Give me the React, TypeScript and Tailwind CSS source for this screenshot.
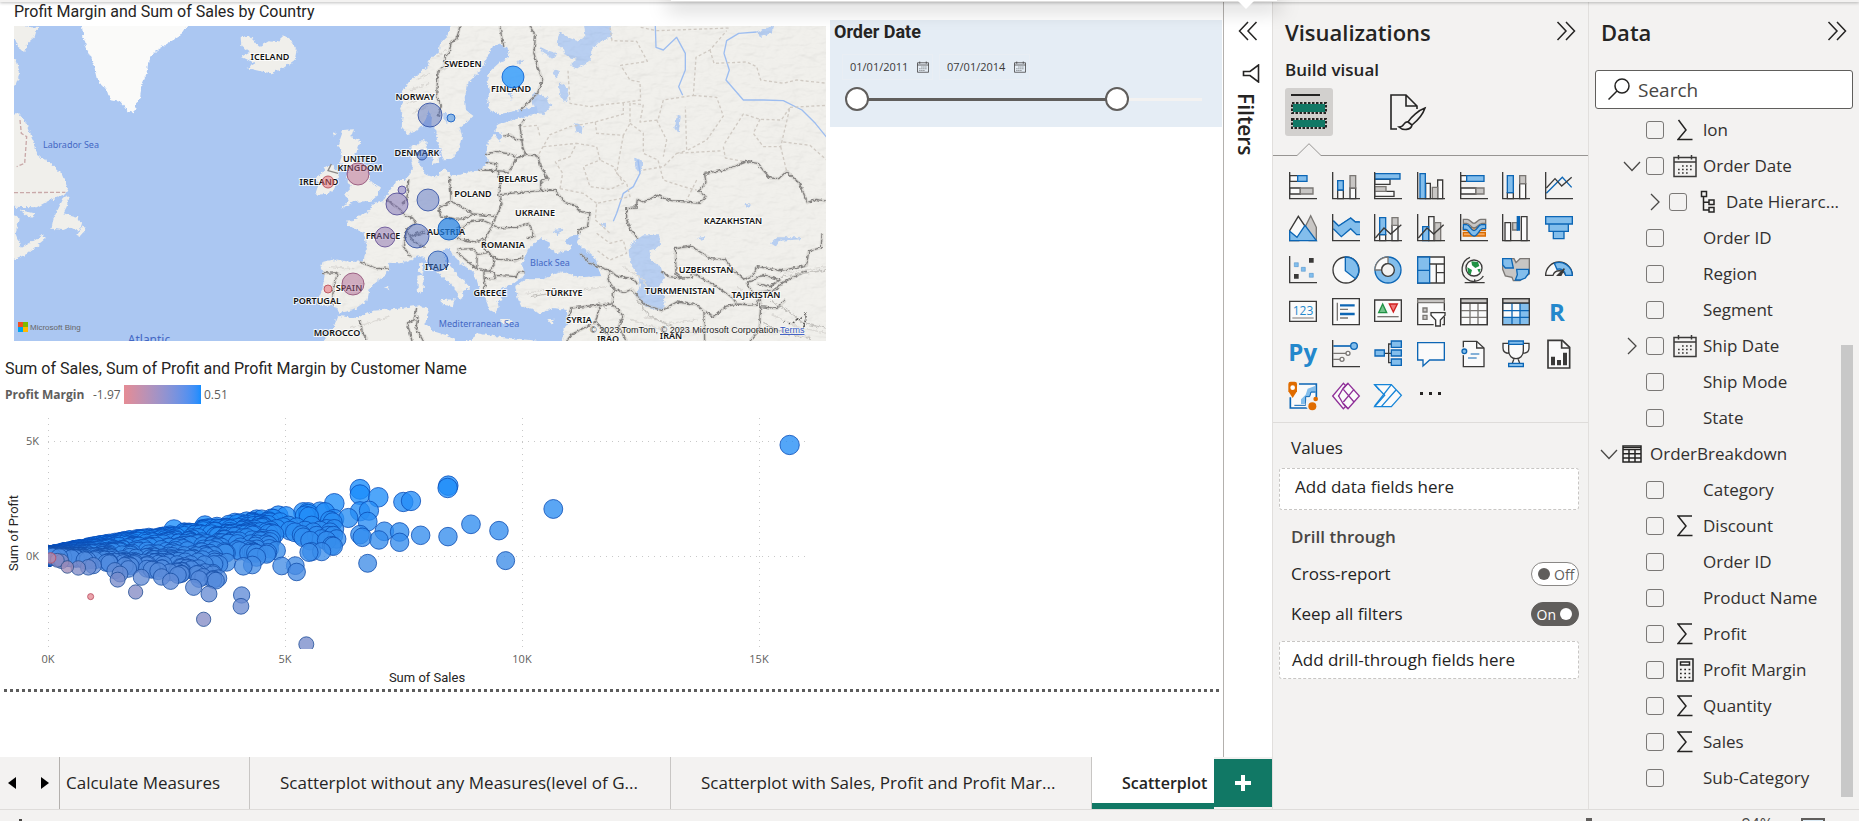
import React, { useState } from "react";

const UI = "font-['Open_Sans','Noto_Sans',sans-serif]";
const INK = "#3b3a39";
const BLUE = "#83beec";
const BLUE_LINE = "#0c66b5";
const GRAY = "#c8c6c4";
const GRAY_LINE = "#7a7774";

/* ---------- Map ---------- */

const countryLabels: [string, number, number][] = [
  ["ICELAND", 270, 60], ["NORWAY", 415, 100], ["SWEDEN", 463, 67], ["FINLAND", 511, 92],
  ["UNITED", 360, 162], ["KINGDOM", 360, 171], ["IRELAND", 319, 185], ["DENMARK", 417, 156],
  ["BELARUS", 518, 182], ["POLAND", 473, 197], ["UKRAINE", 535, 216], ["ROMANIA", 503, 248],
  ["AUSTRIA", 446, 235], ["ITALY", 437, 270], ["FRANCE", 383, 239], ["SPAIN", 349, 291],
  ["PORTUGAL", 317, 304], ["MOROCCO", 337, 336], ["GREECE", 490, 296], ["TÜRKIYE", 564, 296],
  ["SYRIA", 579, 323], ["IRAQ", 608, 342], ["IRAN", 671, 339], ["KAZAKHSTAN", 733, 224],
  ["UZBEKISTAN", 706, 273], ["TURKMENISTAN", 680, 294], ["TAJIKISTAN", 756, 298],
];

const bubbles: [number, number, number, string, string][] = [
  [358, 174, 11, "#b86a90", "#8d4a72"], [328, 182, 6, "#e0606c", "#b3454f"],
  [430, 115, 12, "#5a74c0", "#2b4aa0"], [451, 118, 4, "#2b84e6", "#0c58c0"],
  [513, 77, 11, "#118dff", "#0a5fd0"], [422, 155, 5, "#4a76cc", "#2b4aa0"],
  [402, 190, 4, "#7a70c0", "#4a4498"], [397, 204, 11, "#7a6cb4", "#4c4590"],
  [428, 200, 11, "#5a74c4", "#2b4aa0"], [385, 237, 10, "#8a6fae", "#5c4590"],
  [417, 236, 12, "#5570c0", "#2b4aa0"], [449, 229, 11, "#1f80e6", "#0a55b8"],
  [438, 261, 10, "#3d78d4", "#1c4fae"], [353, 284, 11, "#b06a94", "#8d4a72"],
  [328, 289, 4, "#e8606c", "#b3454f"],
];

const EUROPE =
  "M128 60 L112 108 L92 128 L84 158 L60 176 L52 200 L26 222 L2 240 L-14 262 L-26 282 L-20 306 L-30 326 L-22 352 L-26 382 L-8 402 L20 394 L36 376 L48 356 L56 330 L66 352 L64 376 L80 392 L78 420 L92 446 L98 478 L128 476 L146 448 L156 408 L150 384 L170 368 L190 348 L168 330 L164 292 L176 246 L210 214 L232 172 L244 140 L266 132 L292 142 L298 168 L268 188 L240 214 L230 244 L240 270 L232 302 L238 330 L270 342 L330 330 L380 318 L384 338 L340 352 L300 362 L262 374 L256 392 L278 404 L270 424 L252 404 L234 424 L228 462 L236 488 L218 500 L208 512 L180 514 L152 524 L122 526 L104 506 L76 532 L48 526 L34 500 L24 488 L34 462 L48 452 L50 424 L36 420 L20 436 L2 440 L0 470 L8 500 L2 520 L-14 540 L-40 540 L-52 560 L-70 584 L-82 604 L-108 612 L-126 636 L-150 646 L-166 660 L-190 662 L-188 678 L-160 686 L-138 700 L-130 740 L-140 784 L-180 786 L-228 778 L-262 786 L-268 804 L-256 826 L-264 872 L-276 900 L-268 918 L-228 916 L-212 938 L-170 930 L-128 900 L-120 862 L-74 824 L-62 804 L-66 788 L-30 790 L0 784 L22 766 L44 776 L62 802 L92 824 L120 850 L138 870 L146 896 L160 890 L158 868 L180 866 L176 854 L150 834 L128 806 L104 780 L98 748 L120 744 L126 762 L156 792 L188 816 L202 842 L210 872 L224 892 L240 930 L256 938 L266 922 L262 904 L278 900 L262 878 L280 862 L312 850 L344 826 L336 792 L354 750 L372 730 L390 714 L420 728 L414 742 L440 760 L474 750 L484 738 L462 726 L480 710 L512 700 L500 728 L530 752 L556 776 L566 808 L574 828 L510 832 L452 812 L400 838 L344 838 L316 858 L322 892 L334 920 L364 926 L386 942 L430 924 L470 930 L476 962 L462 992 L452 1040 L1270 1040 L1270 60 Z";

const borders =
  "M150 78 L140 118 L124 124 L118 156 L106 170 L102 200 L84 214 L80 290 L94 318 L84 350 M270 78 L276 118 L282 138 M360 78 L376 108 L372 160 L384 204 L398 240 L382 280 L332 330 M342 360 L330 380 L334 410 L338 440 L346 464 M280 408 L300 404 L318 418 L334 420 M226 464 L258 454 L300 462 L318 470 M230 488 L262 492 L258 512 L208 510 M262 512 L296 516 L318 476 L346 464 L384 468 L392 500 L414 536 L392 544 L392 572 L300 580 L270 584 M262 512 L272 546 L266 582 L276 612 L258 650 L192 642 L124 604 L118 528 M124 604 L86 624 L92 648 L140 658 L160 656 L192 642 M392 572 L434 570 L466 608 L498 616 L506 632 L540 642 L532 680 L506 690 L508 704 M258 650 L248 674 L264 684 L318 682 L356 670 L374 710 L350 714 M160 680 L184 664 L216 660 L248 674 M248 674 L226 716 L196 726 L140 716 L156 696 L160 680 L96 700 M226 716 L216 738 L250 770 L264 778 L318 782 L340 770 M140 748 L190 746 L202 764 L200 808 L140 756 M202 764 L232 758 L250 770 L252 796 L236 814 L206 806 M252 816 L256 836 L222 836 L222 816 L252 816 M256 826 L320 830 L324 816 L346 818 M222 836 L226 856 L210 888 M510 760 L540 790 L600 812 L620 828 L668 836 L684 852 M600 812 L594 840 L612 866 L640 878 L666 868 M612 866 L606 912 L640 948 L626 980 L650 1023 M606 912 L540 918 L482 924 L478 950 M570 918 L556 966 L484 1004 L470 1023 M556 966 L600 1010 M666 868 L700 912 L756 932 L800 906 L860 914 L882 934 L884 1023 M882 934 L912 950 L946 920 L980 912 L968 894 L918 858 L860 826 L842 816 L846 832 L814 834 L798 820 L796 746 L842 738 L902 776 L944 778 L976 816 L1002 838 L1030 826 L1042 800 L1112 812 L1190 796 L1196 754 L1234 742 L1236 700 M814 834 L778 830 L752 814 M980 912 L1040 916 L1050 880 L1100 868 L1114 850 L1190 812 M1040 850 L1080 860 L1110 840 L1060 824 L1010 850 L1030 880 L1090 870 M1050 880 L1052 920 L1100 926 L1126 900 M1052 920 L1048 990 L1020 1023 M684 716 L662 690 L650 660 L650 626 L678 624 L682 598 L700 606 L742 586 L784 602 L870 610 L888 590 L866 574 L888 548 L884 520 L946 510 L1010 484 L1042 490 L1080 534 L1106 536 L1130 514 L1170 552 L1192 608 L1216 598 L1270 606 M-72 598 L-30 628 L-16 646 L8 654 L16 668 L-10 690 L6 720 L44 742 M-4 542 L-10 600 L-24 612 M-10 690 L-20 740 L4 772 M44 690 L0 710 L40 700 L96 700 M-150 786 L-100 806 L-64 804 M-262 818 L-216 820 L-228 850 L-234 914 M-150 960 L-142 1000 L-128 1018 M20 924 L12 960 L-8 970 L6 1023 M24 950 L18 985 L40 1023";

const regions =
  "M600 82 L606 122 L680 124 L712 184 L632 196 L660 240 L690 246 L692 300 L640 308 L598 312 L540 320 L480 310 L474 212 M692 82 L740 92 L960 84 M640 308 L640 342 L556 366 L480 380 L420 404 L382 470 M556 366 L560 400 L640 406 L660 370 L660 310 L700 314 L690 366 L744 360 L760 300 L850 286 L858 172 L900 150 L950 92 M850 286 L920 292 L940 348 L890 420 L830 452 L826 320 M900 150 L912 190 L1010 186 L1040 200 L1052 240 L1120 250 L1160 240 L1252 250 M1140 322 L1252 316 M940 440 L946 474 L1000 484 M944 430 L1000 342 L1050 358 L1114 360 L1140 322 L1112 440 L1060 440 L1030 400 L1050 358 M1120 426 L1200 436 L1250 480 M1112 440 L1130 514 M450 566 L458 520 L436 486 L480 470 L500 430 L560 440 L570 480 L520 500 L540 560 L600 568 L640 550 L610 500 L570 480 M640 406 L630 460 L620 520 L650 550 L660 590 L560 610 L556 660 L600 700 M660 370 L700 400 L700 460 L744 480 L760 540 L820 560 L860 570 M700 510 L760 500 L800 460 L938 452 M740 360 L770 420 L760 470 M450 566 L520 580 L560 610 M560 700 L600 730 L640 720 L650 760 L600 780 L560 750 M340 380 L382 376 L390 410 M400 440 L500 430 M860 540 L830 600 M800 460 L830 452";

function MapVisual() {
  return (
    <svg className="block h-[315px] w-[812px]" viewBox="14 26 812 315" role="img" aria-label="Map of profit margin and sales by country">
      <defs>
        <filter id="relief" x="0" y="0" width="100%" height="100%">
          <feTurbulence type="fractalNoise" baseFrequency="0.02 0.04" numOctaves="4" seed="9" result="n" />
          <feDiffuseLighting in="n" surfaceScale="10" lightingColor="#f8f7f3" result="l">
            <feDistantLight azimuth="225" elevation="75" />
          </feDiffuseLighting>
          <feComposite in="l" in2="SourceGraphic" operator="in" />
        </filter>
        <filter id="coast" x="-5%" y="-5%" width="110%" height="110%">
          <feTurbulence type="fractalNoise" baseFrequency="0.09" numOctaves="3" seed="4" />
          <feDisplacementMap in="SourceGraphic" scale="14" xChannelSelector="R" yChannelSelector="G" />
        </filter>
      </defs>
      <rect x="14" y="26" width="812" height="315" fill="#abc7f2" />
      <g transform="scale(0.33333)">
        <g filter="url(#coast)" fill="#f0efeb">
          <path fill="#fafaf9" d="M244 60 L250 110 L262 150 L280 190 L290 235 L320 270 L330 300 L362 306 L388 336 L402 340 L408 310 L420 300 L424 256 L440 220 L446 180 L470 150 L500 132 L540 108 L566 70 Z" />
          <path d="M20 70 L112 84 L104 110 L82 130 L76 156 L58 146 L46 120 L20 120 Z M20 160 L50 180 L60 220 L44 260 L20 250 Z" />
          <path d="M20 350 L58 340 L76 364 L90 400 L104 430 L112 466 L150 488 L184 520 L204 566 L196 582 L150 600 L110 622 L20 620 Z M192 592 L206 586 L200 620 L190 640 L230 650 L246 672 L236 694 L210 682 L190 690 L154 686 L160 656 Z M232 704 L250 676 L256 690 L240 708 Z M20 640 L60 656 L46 700 L64 744 L130 706 L134 718 L80 762 L20 790 Z M60 630 L100 640 L106 650 L80 648 Z" />
          <path d="M722 112 L748 106 L766 128 L778 140 L806 124 L830 126 L852 106 L870 120 L890 150 L884 180 L850 204 L812 220 L782 214 L742 204 L766 190 L724 170 L750 156 L724 138 Z" />
          <path d="M1030 390 L1062 388 L1054 412 L1082 424 L1070 456 L1056 474 L1090 490 L1106 520 L1112 546 L1140 560 L1136 584 L1114 602 L1060 606 L1026 626 L1046 596 L1036 580 L1054 560 L1040 540 L1046 510 L1020 490 L1026 460 L1014 436 Z" />
          <path d="M976 500 L1000 494 L1016 520 L1006 566 L980 582 L946 584 L956 556 L948 530 L966 520 Z M998 396 L1010 400 L1002 412 Z" />
        </g>
        <g transform="translate(1230 0)">
          <g filter="url(#coast)">
            <path fill="#f0efeb" d={EUROPE} />
            <path fill="#f0efeb" d="M-280 1050 L-232 988 L-216 948 L-160 954 L-110 932 L-40 926 L30 916 L56 930 L46 970 L70 994 L110 1006 L150 1030 L190 1016 L200 1000 L250 1008 L300 1014 L380 1022 L380 1050 Z M70 464 L84 460 L88 488 L66 492 Z M94 900 L134 898 L128 922 L96 912 Z M22 830 L40 826 L42 874 L24 882 Z M28 786 L40 790 L36 822 L26 814 Z M270 958 L310 962 L300 972 L272 968 Z M412 958 L434 956 L424 972 Z M-78 862 L-66 858 L-60 868 Z" />
            <g fill="#abc7f2">
              <path d="M380 78 L600 60 L606 110 L570 124 L544 150 L542 180 L500 206 L480 196 L500 176 L470 170 L460 146 L440 130 L448 96 L470 110 L500 122 L526 110 L520 78 Z" />
              <path d="M668 726 L700 706 L748 706 L750 734 L734 748 L718 750 L724 782 L752 800 L764 832 L750 860 L762 880 L764 926 L730 930 L700 914 L676 886 L690 860 L684 826 L660 790 L656 750 Z" />
              <path d="M372 276 L410 292 L424 316 L400 346 L378 336 L364 304 Z M436 206 L450 216 L440 236 L428 220 Z M446 246 L470 262 L476 290 L462 308 L450 280 Z M390 140 L410 150 L440 160 L430 176 L400 160 Z" />
              <path d="M1040 94 L1090 78 L1084 100 L1050 112 Z M1080 730 L1100 712 L1176 712 L1174 718 L1110 722 L1096 742 Z M800 346 L812 350 L806 400 L796 384 Z M494 372 L520 380 L518 400 L500 398 Z M860 714 L886 710 L876 722 Z M1004 612 L1026 614 L1006 624 Z M672 470 L700 484 L690 520 L676 500 Z M574 670 L590 668 L584 690 Z M100 340 L112 338 L112 370 L100 360 Z M430 690 L458 686 L440 708 Z M320 186 L340 180 L330 194 Z M300 250 L310 270 L306 300 L296 280 Z" />
            </g>
            <path fill="#f0efeb" d="M372 60 L520 60 L526 104 L500 118 L470 106 L440 84 L400 84 Z" />
          </g>
          <path filter="url(#relief)" opacity="0.18" d={EUROPE} />
          <g fill="none" strokeLinejoin="round">
            <path stroke="#9dbdf0" strokeWidth="4" d="M1040 96 L986 100 L950 122 L942 160 L958 210 L948 240 L1000 300 L1060 300 L1120 302 L1176 330 L1216 370 L1250 412 M736 78 L738 142 L760 150 L800 112 L826 160 L826 210 L806 260 L818 286 M684 480 L690 520 L670 560 L640 580 L620 640 L610 664" />
            <path stroke="#d0cac3" strokeWidth="4" strokeDasharray="9 7" d={regions} />
            <path stroke="#b9b7b3" strokeWidth="10" opacity="0.35" d={borders} />
            <path stroke="#858381" strokeWidth="4" d={borders} filter="url(#coast)" />
          </g>
          <g fill="none" stroke="#dcdad6" strokeWidth="4" filter="url(#coast)">
            <path d="M20 240 L60 220 M0 270 L60 250 M-10 310 L50 290 M10 340 L60 310 M80 170 L110 150 M90 210 L150 190 M350 880 L400 870 L460 890 M520 870 L590 860 M640 800 L700 840 L720 880 M700 950 L780 970 L860 960 M980 860 L1040 900 M1080 940 L1160 980 L1250 1000 M1120 820 L1250 800 M660 960 L760 990 M1100 990 L1200 1010 M-240 800 L-170 806 M-200 860 L-130 850 M-180 985 L-60 950" />
            <path stroke="#c4c2be" d="M1080 900 L1130 930 L1180 970 L1250 985 M1060 970 L1120 1000 L1200 1015 M1110 830 L1180 820 L1250 810 M680 900 L720 950 L800 985 L860 1000 M560 900 L590 930 M360 890 L420 880" />
            <path stroke="#5a5856" strokeDasharray="8 6" d="M1120 966 L1150 968 L1190 940 L1180 990" />
          </g>
        </g>
        <g fill="none" stroke="#c9a9a9" strokeWidth="4" strokeDasharray="12 6">
          <path d="M60 360 L64 400 L80 410 L74 490 L50 500 M42 578 L196 577" />
          <path stroke="#8b8886" strokeDasharray="none" d="M994 492 L984 512 L1014 520" />
        </g>
      </g>
      <g className="font-['Noto_Sans',sans-serif] text-[9px] font-semibold" textAnchor="middle" fill="#111" stroke="#fff" strokeWidth="2" strokeOpacity="0.8" style={{ paintOrder: "stroke" }}>
        {countryLabels.map(([name, x, y]) => (
          <text key={name} x={x} y={y}>{name}</text>
        ))}
      </g>
      <g className="font-['Noto_Sans',sans-serif] text-[9px]" fill="#4467c4" textAnchor="middle">
        <text x="71" y="148">Labrador Sea</text>
        <text x="550" y="266">Black Sea</text>
        <text x="479" y="327">Mediterranean Sea</text>
        <text x="149" y="344" className="text-[12px]">Atlantic</text>
      </g>
      {bubbles.map(([x, y, r, fill, stroke]) => (
        <circle key={`${x}-${y}`} cx={x} cy={y} r={r} fill={fill} fillOpacity={fill === "#118dff" || fill === "#1f80e6" ? 0.7 : 0.5} stroke={stroke} strokeOpacity="0.8" />
      ))}
      <g>
        <rect x="18" y="322" width="5" height="5" fill="#f25022" />
        <rect x="23" y="322" width="5" height="5" fill="#7fba00" />
        <rect x="18" y="327" width="5" height="5" fill="#00a4ef" />
        <rect x="23" y="327" width="5" height="5" fill="#ffb900" />
        <text x="30" y="330" className="font-['Liberation_Sans',sans-serif] text-[8px]" fill="#666">Microsoft Bing</text>
      </g>
      <g className="font-['Liberation_Sans',sans-serif] text-[9px]" fill="#222" stroke="#fff" strokeWidth="1" strokeOpacity="0.6" style={{ paintOrder: "stroke" }}>
        <text x="590" y="333">© 2023 TomTom, © 2023 Microsoft Corporation</text>
        <text x="780" y="333" fill="#3355c0" textDecoration="underline">Terms</text>
      </g>
    </svg>
  );
}

/* ---------- Scatter chart ---------- */

type Customer = { sales: number; profit: number };

const standouts: [number, number][] = [
  [522, 542], [1003, 463], [1080, 421], [1080, 437], [1135, 445], [1210, 459], [1233, 456], [1080, 487],
  [1107, 485], [1045, 507], [1103, 518], [1080, 557], [1087, 565], [1153, 547], [1199, 549], [1137, 573],
  [1199, 580], [1103, 643], [1262, 559], [1344, 563], [1413, 526], [1497, 545], [1517, 635], [1345, 410],
  [1343, 417], [1660, 480], [2369, 288], [845, 651], [886, 650], [890, 669], [829, 605], [730, 652],
  [757, 648], [725, 738], [723, 772], [581, 715], [627, 735], [611, 811], [919, 886], [407, 729],
  [353, 692], [272, 743], [512, 697], [424, 685], [648, 695], [655, 688], [485, 684], [235, 657],
  [202, 654], [265, 655], [280, 650], [152, 627], [172, 634], [185, 637], [927, 610], [935, 608],
  [965, 608], [1000, 592], [1010, 570], [930, 575], [950, 560], [985, 560], [960, 545], [1003, 540],
  [998, 520], [990, 515], [925, 490], [915, 500], [927, 503], [960, 488], [975, 490], [905, 558],
  [885, 550], [870, 545], [850, 535], [835, 500], [858, 502], [823, 556], [800, 550], [1003, 510],
  [980, 575], [910, 565], [935, 530], [965, 570], [770, 625], [680, 640], [560, 658], [345, 665],
  [360, 675], [385, 660], [615, 670], [640, 690], [510, 670], [740, 518], [770, 512], [785, 512],
  [800, 520], [820, 510], [840, 520], [830, 540], [865, 530], [890, 535], [915, 545], [940, 550],
  [910, 490], [925, 495], [980, 540], [990, 550], [1000, 560], [995, 590], [705, 522], [615, 530],
];

function buildCustomers(): Customer[] {
  let seed = 20231;
  const next = () => {
    seed = (seed * 16807) % 2147483647;
    return seed / 2147483647;
  };
  const list: Customer[] = standouts.map(([x, y]) => ({
    sales: ((x - 145) / 711) * 5000,
    profit: ((622 - y) / 345) * 5000,
  }));
  for (let i = 0; i < 780; i++) {
    const sales = 20 + 4700 * Math.pow(next(), 1.8);
    const ceiling = 0.49 - 0.13 * Math.min(1, sales / 2500);
    let margin = ceiling - 0.68 * Math.pow(next(), 1.5);
    if (sales > 3600) margin = Math.max(margin, 0.02 + next() * 0.3);
    list.push({ sales, profit: sales * margin });
  }
  return list;
}

const low = [229, 139, 148];
const high = [17, 141, 255];

const marks = buildCustomers()
  .map(({ sales, profit }) => {
    const t = Math.min(1, Math.max(0, (profit / sales + 1.97) / 2.48));
    const rgb = low.map((c, i) => Math.round(c + (high[i] - c) * t));
    const edge = [rgb[0] * 0.25, rgb[1] * 0.55, rgb[2] * 0.75].map(Math.round);
    if (t < 0.3) { edge[0] = 185; edge[1] = 75; edge[2] = 95; }
    return {
      x: 48.3 + (sales / 5000) * 237,
      y: 557.3 - (profit / 5000) * 115,
      r: Math.sqrt(9 + 92 * t),
      fill: `rgb(${rgb.join(",")})`,
      stroke: `rgb(${edge.join(",")})`,
    };
  })
  .sort((a, b) => b.r - a.r);

function ScatterVisual() {
  return (
    <svg className="block h-[272px] w-[830px]" viewBox="0 414 830 272" role="img" aria-label="Scatter chart of sales and profit by customer">
      <clipPath id="plot"><rect x="48" y="414" width="760" height="236" /></clipPath>
      <g stroke="#c8c8c8" strokeDasharray="1 5" fill="none">
        {[48.5, 285.5, 522.5, 759.5].map((x) => <path key={x} d={`M${x} 419V650`} />)}
        {[442.5, 557.5].map((y) => <path key={y} d={`M48 ${y}H806`} />)}
      </g>
      <g clipPath="url(#plot)">
        {marks.map((m, i) => (
          <circle key={i} cx={m.x} cy={m.y} r={m.r} fill={m.fill} fillOpacity="0.78" stroke={m.stroke} strokeOpacity="0.8" />
        ))}
      </g>
      <g className="font-['Open_Sans',sans-serif] text-[11px]" fill="#605e5c">
        <text x="39" y="446" textAnchor="end">5K</text>
        <text x="39" y="561" textAnchor="end">0K</text>
        <text x="48" y="664" textAnchor="middle">0K</text>
        <text x="285" y="664" textAnchor="middle">5K</text>
        <text x="522" y="664" textAnchor="middle">10K</text>
        <text x="759" y="664" textAnchor="middle">15K</text>
      </g>
      <g className="font-[Roboto,sans-serif] text-[13px]" fill="#252423" textAnchor="middle">
        <text x="427" y="683">Sum of Sales</text>
        <text transform="translate(18 534) rotate(-90)">Sum of Profit</text>
      </g>
    </svg>
  );
}

/* ---------- Small icons ---------- */

function DoubleChevron({ left = false }: { left?: boolean }) {
  return (
    <svg width="20" height="20" viewBox="0 0 20 20" fill="none" stroke="#252423" strokeWidth="1.5">
      {left ? <path d="M10 1L1.500 10L10 19M18.500 1L10 10L18.500 19" /> : <path d="M1.500 1L10 10L1.500 19M10 1L18.500 10L10 19" />}
    </svg>
  );
}

function CalendarIcon({ size }: { size: number }) {
  return (
    <svg width={size} height={size} viewBox="0 0 24 24" fill="none" stroke="#3b3a39" strokeWidth="1.500">
      <path d="M1 3.500h22v19H1zM1 8h22M5.500 1v4.500M18.500 1v4.500" />
      <path strokeWidth="1.700" strokeDasharray="1.700 2.300" d="M9 12h11M5 15.500h15M5 19h11" />
    </svg>
  );
}

function SigmaIcon({ clipped = false }: { clipped?: boolean }) {
  return (
    <svg width="16" height="22" viewBox="0 0 16 22" fill="none" stroke="#252423" strokeWidth="1.500">
      <path d={clipped ? "M1.500 1L9 11L1 20.500H15.500" : "M15 1H1L9 11L1 20.500H15.500"} />
    </svg>
  );
}

function HierarchyIcon() {
  return (
    <svg width="16" height="24" viewBox="0 0 16 24" fill="none" stroke="#252423" strokeWidth="1.500">
      <path d="M1.500 1.500h5v5h-5zM9 10h5v4.500H9zM9 17.500h5V22H9zM3.500 6.500V20H9M3.500 12.200H9" />
    </svg>
  );
}

function CalculatorIcon() {
  return (
    <svg width="18" height="24" viewBox="0 0 18 24" fill="none" stroke="#252423" strokeWidth="1.500">
      <path d="M1 1h16v22H1zM4.500 4h9v3h-9z" />
      <path strokeWidth="1.700" strokeDasharray="1.700 2.600" d="M4 11.500h11M4 15.500h11M4 19.500h11" />
    </svg>
  );
}

function TableIcon() {
  return (
    <svg width="20" height="18" viewBox="0 0 20 18" fill="none" stroke="#252423" strokeWidth="1.500">
      <path d="M1 1h18v16H1zM1 4.500h18M1 8.800h18M1 13h18M7 4.500V17M13 4.500V17" />
      <path d="M1 2.500h18" strokeWidth="1" />
    </svg>
  );
}

function Chevron({ open }: { open: boolean }) {
  return (
    <svg width="18" height="18" viewBox="0 0 18 18" fill="none" stroke="#494846" strokeWidth="1.300">
      {open ? <path d="M1 5L9 13.500L17 5" /> : <path d="M5 1L13 9L5 17" />}
    </svg>
  );
}

/* ---------- Visual gallery ---------- */

const Axis = () => <path d="M2 0V80H84" stroke={INK} />;
const blue = { fill: BLUE, stroke: BLUE_LINE };
const gray = { fill: GRAY, stroke: GRAY_LINE };
const plain = { fill: "#fafafa", stroke: INK };

const gallery: [string, React.ReactNode][] = [
  ["Stacked bar chart", <><path d="M2 11h24v17H2zM2 48h32v18H2z" {...plain} /><path d="M26 11h28v17H26z" {...blue} /><path d="M34 48h38v18H34z" {...gray} /><Axis /></>],
  ["Stacked column chart", <><path d="M17 54h17v26H17zM54 48h17v32H54z" {...plain} /><path d="M17 26h17v28H17z" {...blue} /><path d="M54 11h17v37H54z" {...gray} /><Axis /></>],
  ["Clustered bar chart", <><path d="M2 22h46v15H2zM2 58h58v15H2z" {...plain} /><path d="M2 5h76v16H2z" {...blue} /><path d="M2 44h34v14H2z" {...gray} /><Axis /></>],
  ["Clustered column chart", <><path d="M26 34h14v46H26zM62 24h15v56H62z" {...plain} /><path d="M9 5h16v75H9z" {...blue} /><path d="M46 46h16v34H46z" {...gray} /><Axis /></>],
  ["100% stacked bar chart", <><path d="M2 11h18v17H2zM2 48h46v18H2z" {...plain} /><path d="M20 11h52v17H20z" {...blue} /><path d="M48 48h24v18H48z" {...gray} /><Axis /></>],
  ["100% stacked column chart", <><path d="M16 62h18v18H16zM53 35h18v45H53z" {...plain} /><path d="M16 11h18v51H16z" {...blue} /><path d="M53 11h18v24H53z" {...gray} /><Axis /></>],
  ["Line chart", <><path d="M4 64L52 16L80 46" stroke={BLUE_LINE} /><path d="M4 48L30 20L50 42L80 16" stroke={INK} /><Axis /></>],
  ["Area chart", <><path d="M44 48L65 5L82 40V80H60z" {...gray} /><path d="M2 50L28 7L56 48L30 80H2z" {...plain} /><path d="M2 52L24 70L48 34L82 80H2z" {...blue} /></>],
  ["Stacked area chart", <><path d="M4 20L20 36L56 12L70 24H82" {...blue} fill="none" /><path d="M4 20L20 36L56 12L70 24H84V62H74L56 44L28 68L4 44z" fill={BLUE} /><path d="M4 20L20 36L56 12L70 24H84M84 62H74L56 44L28 68L4 44" stroke={BLUE_LINE} /><Axis /></>],
  ["Line and stacked column chart", <><path d="M17 62h18v18H17zM54 34h18v46H54z" {...plain} /><path d="M17 11h18v51H17z" {...blue} /><path d="M54 11h18v23H54z" {...gray} /><path d="M4 72L30 42L50 60L82 32" stroke={INK} /><Axis /></>],
  ["Line and clustered column chart", <><path d="M35 8h16v72H35z" {...plain} /><path d="M17 38h18v42H17z" {...blue} /><path d="M53 26h18v54H53z" {...gray} /><path d="M4 72L30 42L50 60L80 32" stroke={INK} /><Axis /></>],
  ["Ribbon chart", <><path d="M10 40h66v10H10zM10 56h66v10H10z" fill="#f7a65a" stroke="#d86b00" /><path d="M10 16H22C30 16 34 28 42 28S54 16 62 16H77V28H66C56 28 52 42 42 42S30 28 20 28H10z" {...gray} /><path d="M10 32H20C30 32 32 50 42 50S54 32 64 32H77V44H68C58 44 54 66 42 66S26 46 18 46H10z" {...blue} /><path d="M2 0V80H84" stroke={INK} /></>],
  ["Waterfall chart", <><path d="M9 26h17v54H9zM58 8h17v72H58z" {...plain} /><path d="M32 26h14v22H32z" {...gray} /><path d="M46 8h6v40h-6z" fill={BLUE_LINE} stroke={BLUE_LINE} /><Axis /></>],
  ["Funnel", <><path d="M2 8h80v22H2zM12 30h58v22H12zM25 52h32v22H25z" {...blue} /></>],
  ["Scatter chart", <><path d="M60 6h14v14H60zM15 54h14v14H15z" fill={INK} /><path d="M16 20h12v12H16zM37 34h12v12H37zM61 52h12v12H61z" fill={BLUE} stroke={BLUE_LINE} strokeWidth="1" /><Axis /></>],
  ["Pie chart", <><circle cx="42" cy="42" r="39" {...plain} /><path d="M40 3V44L70 68A39 39 0 0 0 40 3z" {...blue} /></>],
  ["Donut chart", <><circle cx="42" cy="42" r="39" {...blue} /><path d="M3 42A39 39 0 0 1 42 3V22A20 20 0 0 0 22 42z" stroke={GRAY_LINE} fill="#fafafa" /><circle cx="42" cy="42" r="19" fill="#f3f2f1" stroke={INK} /></>],
  ["Treemap", <><path d="M2 3h80v78H2z" {...plain} /><path d="M2 3h36v40H2zM2 43h36v38H2z" {...blue} /><path d="M38 24h44M58 24v57M58 50h24" stroke={INK} /></>],
  ["Map", <><circle cx="42" cy="36" r="24" fill="#fff" stroke={INK} /><path d="M34 16L54 18L58 30L46 36L36 28zM22 34L36 42L32 56L24 50zM52 40L62 38L58 52z" fill="#209245" /><path d="M30 4A38 38 0 0 0 22 70C36 82 60 76 70 60M44 70V80M14 80H74" stroke={INK} /></>],
  ["Filled map", <><path d="M2 8H36L42 20L54 8H82V54L66 64L54 74H34L30 64L10 60L2 40z" {...gray} /><path d="M2 8H28L34 36H10L2 26z" {...blue} /><path d="M44 40H80V52L70 66L54 72H40L46 56z" {...blue} /></>],
  ["Gauge", <><path d="M2 58A40 40 0 0 1 82 58H62A20 20 0 0 0 24 58z" {...plain} /><path d="M28 22A40 40 0 0 1 82 58H62A20 20 0 0 0 36 40z" {...blue} /><path d="M38 58L58 38L48 58z" fill={INK} stroke={INK} /></>],
  ["Card", <><path d="M2 10h80v60H2z" {...plain} /><text x="42" y="52" textAnchor="middle" className="font-['Open_Sans'] text-[36px]" fill="#2488cc">123</text><path d="M10 60h64" stroke={GRAY_LINE} strokeWidth="3" /></>],
  ["Multi-row card", <><path d="M2 2h80v78H2z" {...plain} /><path d="M16 14v54M24 34h24M24 60h24" stroke={GRAY_LINE} /><path d="M24 22h44M24 48h44" stroke={BLUE_LINE} strokeWidth="7" /></>],
  ["KPI", <><path d="M2 6h80v64H2z" {...plain} /><path d="M26 18L38 44H14z" fill="#74c48c" stroke="#209245" /><path d="M46 18H70L58 42z" fill="#f27878" stroke="#d02020" /><path d="M10 56h64" stroke={GRAY_LINE} /></>],
  ["Slicer", <><path d="M2 2h80v78H2z" {...plain} /><path d="M2 4h80v10H2zM18 30h12v12H18zM18 52h12v12H18z" {...gray} /><path d="M36 38H90V56H76V88H50V56H36z" fill="#f3f2f1" /><path d="M42 44H84V52L70 66V84H56V66L42 52z" fill="#fff" stroke={INK} /></>],
  ["Table", <><path d="M2 2h80v78H2z" {...plain} /><path d="M2 15h80M2 38h80M2 58h80M30 15v65M54 15v65" stroke={GRAY_LINE} /><path d="M2 2h80v13H2z" fill={GRAY} stroke={INK} /><path d="M2 2h80v78H2z" stroke={INK} /></>],
  ["Matrix", <><path d="M2 2h80v78H2z" {...plain} /><path d="M54 15h28v65H2V58h52z" fill={BLUE} /><path d="M2 15h80M2 38h80M2 58h80M30 15v65M54 15v65" stroke={BLUE_LINE} /><path d="M2 2h80v13H2z" fill={GRAY} stroke={INK} /><path d="M2 2h80v78H2z" stroke={INK} /></>],
  ["R script visual", <text x="36" y="68" textAnchor="middle" className="font-['Open_Sans'] text-[72px] font-bold" fill="#2488cc">R</text>],
  ["Python visual", <text x="41" y="62" textAnchor="middle" className="font-['Open_Sans'] text-[72px] font-bold" fill="#2488cc">Py</text>],
  ["Key influencers", <><path d="M4 18H56" stroke={BLUE_LINE} strokeWidth="5" /><circle cx="66" cy="18" r="10" {...blue} /><path d="M4 40H42M4 58H26" stroke={GRAY_LINE} /><circle cx="48" cy="40" r="6" fill="#fff" stroke={GRAY_LINE} /><circle cx="30" cy="58" r="6" fill="#fff" stroke={GRAY_LINE} /><Axis /></>],
  ["Decomposition tree", <><path d="M30 40H52M52 12H44V68H52" stroke={INK} /><path d="M3 30h28v18H3zM52 3h30v19H52zM52 30h30v18H52zM52 57h30v19H52z" {...blue} /></>],
  ["Q&A", <path d="M2 8H82V60H38L18 78V60H2z" fill="#fafafa" stroke={BLUE_LINE} />],
  ["Narrative", <><path d="M10 4H50L72 24V80H10z" {...plain} /><path d="M50 4V24H72" stroke={INK} /><path d="M32 42h26M24 54h26" stroke={BLUE_LINE} strokeWidth="3" /><circle cx="12" cy="34" r="12" fill="#f3f2f1" /><circle cx="13" cy="34" r="7" {...blue} /></>],
  ["Goals", <><path d="M20 8H64V32C64 64 20 64 20 32zM20 10H3V24C3 36 10 40 22 40M64 10H81V24C81 36 74 40 62 40M36 56L30 72H54L48 56" fill="#fafafa" stroke={INK} /><path d="M20 3h44v10H20zM20 70h44v10H20z" {...blue} /></>],
  ["Paginated report", <><path d="M9 1H52L74 22V84H9z" {...plain} strokeWidth="5" /><path d="M50 1V24H74" stroke={INK} strokeWidth="5" /><path d="M18 50h12v26H18zM36 60h12v16H36zM54 38h12v38H54z" fill={INK} /></>],
  ["ArcGIS Maps", <><path d="M30 6H82V56H70V78H4V46" stroke={BLUE_LINE} fill="#fafafa" strokeWidth="5" /><path d="M78 12V32H66L62 44H50V66H36V52L50 38L56 20z" fill={BLUE} /><path d="M80 30H66L62 44H50V70H16" stroke={BLUE_LINE} strokeWidth="3" /><path d="M-2 6Q-2 -1 5 -1H17Q24 -1 24 6V28L11 48L-2 28z" fill="#e06c00" /><circle cx="11" cy="17" r="7" fill="#fff" /><circle cx="72" cy="66" r="22" fill="#f3f2f1" /><circle cx="70" cy="73" r="12" fill="#e06c00" /><circle cx="80" cy="51" r="7" fill="#e06c00" /></>],
  ["Power Apps", <g stroke="#8f2f98" fill="#fafafa"><path d="M34 4L2 42L34 80L48 66L34 52L20 42L34 26L48 18z" /><path d="M48 4L82 42L48 80L34 66L20 42L34 18z" /><path d="M34 22L66 60M66 22L34 60M48 4L34 20M48 80L34 64" fill="none" /></g>],
  ["Power Automate", <g stroke="#1685d8" fill="#fafafa"><path d="M2 8H52L82 40L52 74H2L32 40z" /><path d="M52 8L2 72M66 24L22 74M2 8L16 24" fill="none" /></g>],
];

/* ---------- Panes ---------- */

type Field = { label: string; icon?: React.ReactNode; open?: boolean; child?: boolean; table?: boolean };

const fields: Field[] = [
  { label: "lon", icon: <SigmaIcon clipped /> },
  { label: "Order Date", icon: <CalendarIcon size={24} />, open: true },
  { label: "Date Hierarc...", icon: <HierarchyIcon />, open: false, child: true },
  { label: "Order ID" },
  { label: "Region" },
  { label: "Segment" },
  { label: "Ship Date", icon: <CalendarIcon size={24} />, open: false },
  { label: "Ship Mode" },
  { label: "State" },
  { label: "OrderBreakdown", table: true, open: true },
  { label: "Category" },
  { label: "Discount", icon: <SigmaIcon /> },
  { label: "Order ID" },
  { label: "Product Name" },
  { label: "Profit", icon: <SigmaIcon /> },
  { label: "Profit Margin", icon: <CalculatorIcon /> },
  { label: "Quantity", icon: <SigmaIcon /> },
  { label: "Sales", icon: <SigmaIcon /> },
  { label: "Sub-Category" },
];

function FieldRow({ field, index }: { field: Field; index: number }) {
  if (field.table) {
    return (
      <li className="flex h-9 items-center pl-2">
        <button aria-label="Collapse OrderBreakdown" className="flex w-6 justify-center"><Chevron open /></button>
        <span className="ml-px mr-2"><TableIcon /></span>
        <span>{field.label}</span>
      </li>
    );
  }
  return (
    <li className={`flex h-9 items-center ${field.child ? "pl-[52px]" : "pl-[29px]"}`}>
      <span className="flex w-7 shrink-0 justify-center">
        {field.open !== undefined && (
          <button aria-label={`Toggle ${field.label}`}><Chevron open={field.open} /></button>
        )}
      </span>
      <input id={`field-${index}`} type="checkbox" className="size-[18px] shrink-0 appearance-none rounded-[3px] border border-[#7a7876] bg-transparent checked:bg-[#117865]" />
      <label htmlFor={`field-${index}`} className="flex items-center whitespace-nowrap">
        <span className="ml-[5px] mr-0.5 flex w-8 shrink-0 justify-center">{field.icon}</span>
        {field.label}
      </label>
    </li>
  );
}

function DataPane() {
  return (
    <aside className="flex w-[271px] shrink-0 flex-col border-l border-[#e1dfdd] bg-[#f3f2f1]">
      <header className="flex h-[70px] items-start justify-between pl-3 pr-3 pt-4">
        <h2 className="text-[22px] leading-8 font-semibold text-[#252423]">Data</h2>
        <button aria-label="Collapse data pane" className="mt-[5px]"><DoubleChevron /></button>
      </header>
      <label className="ml-1.5 mr-1.5 flex h-[39px] shrink-0 items-center gap-2 rounded-[3px] border border-[#605e5c] bg-white pl-3 pt-0.5">
        <svg className="mb-1" width="22" height="22" viewBox="0 0 22 22" fill="none" stroke="#252423" strokeWidth="1.500">
          <circle cx="14" cy="8" r="7" /><path d="M9 13L0.500 21.500" />
        </svg>
        <input aria-label="Search" placeholder="Search" className="min-w-0 flex-1 bg-transparent text-[19px] outline-none placeholder:text-[#484644]" />
      </label>
      <div className="mt-[3px] flex min-h-0 flex-1 pb-3">
        <ul className="min-w-0 flex-1 overflow-hidden text-[17px] text-[#32302f]">
          {fields.map((f, i) => <FieldRow key={i} field={f} index={i} />)}
        </ul>
        <div className="mr-1.5 flex w-3 flex-col justify-end">
          <div className="h-[66%] bg-[#c8c8c8]" />
        </div>
      </div>
    </aside>
  );
}

function Toggle({ id, on, onChange }: { id: string; on: boolean; onChange: () => void }) {
  return (
    <span className={`relative flex h-6 w-12 items-center gap-1 rounded-full border text-[14px] ${on ? "flex-row-reverse border-[#605e5c] bg-[#605e5c] pr-1.5 text-white" : "border-[#8a8886] bg-white pl-1.5 text-[#605e5c]"}`}>
      <input id={id} type="checkbox" role="switch" checked={on} onChange={onChange} className="absolute inset-0 m-0 size-full cursor-pointer opacity-0" />
      <span className={`size-3 rounded-full ${on ? "bg-white" : "bg-[#605e5c]"}`} />
      <span>{on ? "On" : "Off"}</span>
    </span>
  );
}

function VisualizationsPane() {
  const [cross, setCross] = useState(false);
  const [keep, setKeep] = useState(true);
  return (
    <aside className="flex w-[316px] shrink-0 flex-col border-l border-[#e1dfdd] bg-[#f3f2f1] text-[17px] text-[#252423]">
      <header className="flex items-start justify-between pl-3 pr-3 pt-4">
        <h2 className="text-[22px] leading-8 font-semibold">Visualizations</h2>
        <button aria-label="Collapse visualizations pane" className="mt-[5px]"><DoubleChevron /></button>
      </header>
      <h3 className="mt-2.5 pl-3 leading-6 font-semibold">Build visual</h3>
      <div className="mt-1.5 flex gap-[51px] pl-3">
        <button aria-label="Build visual" className="flex size-12 items-center justify-center rounded-[3px] bg-[#d2d0ce]">
          <svg width="36" height="36" viewBox="0 0 36 36">
            <path d="M0 1h29" stroke="#252423" strokeWidth="2" />
            <path d="M1 9h34v10H1zM1 25h34v9H1z" fill="#117865" stroke="#d2d0ce" strokeWidth="2" />
            <path d="M1 9h34v10H1zM1 25h34v9H1z" fill="none" stroke="#252423" strokeWidth="2" strokeDasharray="2.500 1.500" />
          </svg>
        </button>
        <button aria-label="Format page" className="flex size-12 items-center justify-center">
          <svg width="38" height="38" viewBox="0 0 38 38" fill="none" stroke="#252423" strokeWidth="1.600">
            <path d="M8 36H2V2H17L28 13V16M17 2V13H28" />
            <path d="M36 15C30 17 22 24 19 29L23 32C28 28 34 21 36 15zM19 29C14 28 16 34 10 34C14 38 22 37 23 32z" fill="#f3f2f1" />
          </svg>
        </button>
      </div>
      <div className="mt-[7px] flex h-[13px]">
        <span className="w-6 border-b border-[#979593]" />
        <svg width="24" height="13" viewBox="0 0 24 13" fill="none" stroke="#979593"><path d="M0 12.500L12 0.700L24 12.500" /></svg>
        <span className="flex-1 border-b border-[#979593]" />
      </div>
      <div className="mt-[9px] grid grid-cols-7 pl-[9px] pr-2 pb-[5px]">
        {gallery.map(([name, art]) => (
          <button key={name} aria-label={name} title={name} className="flex h-[42px] items-center justify-center">
            <svg width="28" height="28" viewBox="0 0 84 84" fill="none" strokeWidth="4" overflow="visible">{art}</svg>
          </button>
        ))}
        <button aria-label="Get more visuals" className="flex h-[42px] items-center justify-center pb-1">
          <svg width="24" height="4" viewBox="0 0 24 4" fill="#252423"><rect x="1" y="0" width="3" height="3" /><rect x="10" y="0" width="3" height="3" /><rect x="19" y="0" width="3" height="3" /></svg>
        </button>
      </div>
      <section className="border-t border-[#dedcda] pl-1.5 pr-[9px]">
        <h3 className="pl-3 pt-[11px] leading-7">Values</h3>
        <div className="mt-1.5 flex h-[42px] items-center rounded-[3px] border border-dashed border-[#c8c6c4] bg-white pb-1 pl-[15px]">Add data fields here</div>
        <h3 className="mt-[13px] pl-3 leading-7 font-semibold text-[#484644]">Drill through</h3>
        <div className="mt-[3px] flex h-10 items-center justify-between pl-3">
          <label htmlFor="cross">Cross-report</label>
          <Toggle id="cross" on={cross} onChange={() => setCross(!cross)} />
        </div>
        <div className="flex h-10 items-center justify-between pl-3">
          <label htmlFor="keep">Keep all filters</label>
          <Toggle id="keep" on={keep} onChange={() => setKeep(!keep)} />
        </div>
        <div className="mt-[7px] flex h-[38px] items-center rounded-[3px] border border-dashed border-[#c8c6c4] bg-white pl-3">Add drill-through fields here</div>
      </section>
    </aside>
  );
}

const THUMB =
  "pointer-events-none absolute inset-0 m-0 size-full appearance-none bg-transparent [&::-webkit-slider-thumb]:pointer-events-auto [&::-webkit-slider-thumb]:size-6 [&::-webkit-slider-thumb]:appearance-none [&::-webkit-slider-thumb]:rounded-full [&::-webkit-slider-thumb]:border-2 [&::-webkit-slider-thumb]:border-solid [&::-webkit-slider-thumb]:border-[#605e5c] [&::-webkit-slider-thumb]:bg-white";

function DateSlicer() {
  return (
    <section className="mt-[18px] ml-1 mr-px h-[107px] min-w-0 flex-1 bg-[#e5edf5] pr-2">
      <h2 className="pl-1 font-[Roboto,sans-serif] text-[18px] leading-6 font-bold text-[#252423]">Order Date</h2>
      <div className="mt-2.5 ml-3 flex gap-1.5">
        {["01/01/2011", "07/01/2014"].map((value, i) => (
          <label key={value} className="flex h-[26px] w-[91px] items-center gap-2 border border-[#e9eef4] pl-[7px]">
            <input aria-label={i === 0 ? "Start date" : "End date"} defaultValue={value} className="w-[59px] bg-transparent text-[11px] text-[#3b3a39] outline-none" />
            <CalendarIcon size={12} />
          </label>
        ))}
      </div>
      <div className="relative mx-[15px] mt-[7px] mr-0 flex h-6 items-center">
        <div className="ml-3 h-[3px] w-[73%] bg-[#605e5c]" />
        <div className="mr-3 h-[3px] flex-1 bg-[#f3f2f1]" />
        <input type="range" aria-label="Start of range" min={0} max={1000} defaultValue={0} className={THUMB} />
        <input type="range" aria-label="End of range" min={0} max={1000} defaultValue={754} className={THUMB} />
      </div>
    </section>
  );
}

export default function App() {
  return (
    <div className={`relative flex h-screen flex-col overflow-hidden bg-white ${UI}`}>
      <div className="pointer-events-none absolute inset-x-0 top-0 z-10 flex h-0.5 bg-[#f3f2f1] shadow-[0_1px_3px_rgba(0,0,0,0.3)]">
        <div className="w-[36.100%]" />
        <div className="relative h-px w-[606px] bg-white shadow-[0_4px_20px_4px_rgba(0,0,0,0.25)]">
          <svg className="absolute right-[22px] top-0" width="18" height="9" viewBox="0 0 18 9"><path d="M0 0H18L9 9z" fill="#fff" /></svg>
        </div>
      </div>
      <div className="flex min-h-0 flex-1">
        <div className="flex min-w-0 flex-1 flex-col">
          <div className="flex min-h-0 flex-1">
            <main className="min-w-0 flex-1 overflow-hidden pt-0.5">
              <div className="flex">
                <section className="shrink-0 pl-3.5">
                  <h2 className="h-6 font-[Roboto,sans-serif] text-[16px] leading-5 text-[#252423]">Profit Margin and Sum of Sales by Country</h2>
                  <MapVisual />
                </section>
                <DateSlicer />
              </div>
              <section className="pt-[18px]">
                <h2 className="pl-[5px] font-[Roboto,sans-serif] text-[16px] leading-5 text-[#252423]">Sum of Sales, Sum of Profit and Profit Margin by Customer Name</h2>
                <div className="mt-1.5 flex h-[19px] items-center pl-[5px] text-[12px] text-[#605e5c]">
                  <span className="w-[88px] font-bold">Profit Margin</span>
                  <span className="w-[31px]">-1.97</span>
                  <span className="h-[19px] w-[77px] bg-linear-to-r from-[#e58b94] to-[#118dff]" />
                  <span className="pl-[3px]">0.51</span>
                </div>
                <div className="pt-[9px]"><ScatterVisual /></div>
              </section>
              <div className="ml-1 mr-1 mt-1 h-[3px] bg-[repeating-linear-gradient(90deg,#5c5c5c_0_3px,transparent_3px_6px)]" />
            </main>
            <aside className="flex w-[49px] shrink-0 flex-col items-center border-l border-[#b3b0ad] pt-[21px]">
              <button aria-label="Expand filters"><DoubleChevron left /></button>
              <svg className="mt-[23px] ml-1.5" width="18" height="19" viewBox="0 0 18 19" fill="none" stroke="#252423" strokeWidth="1.600">
                <path d="M16.500 1V18L8 11.500H1.500V7.500H8z" />
              </svg>
              <h2 className="mt-2.5 mr-1 text-[21px] leading-6 font-semibold text-[#252423] [writing-mode:vertical-rl]">Filters</h2>
            </aside>
          </div>
          <nav className="flex h-[52px] shrink-0 bg-[#f3f2f1] text-[17px] text-[#252423]">
            <div className="flex w-[60px] shrink-0 items-center justify-between border-r border-[#b3b0ad] pl-2 pr-2.5">
              <button aria-label="Previous page"><svg width="8" height="12" viewBox="0 0 8 12"><path d="M8 0V12L0 6z" /></svg></button>
              <button aria-label="Next page"><svg width="8" height="12" viewBox="0 0 8 12"><path d="M0 0V12L8 6z" /></svg></button>
            </div>
            <div className="flex min-w-0 flex-1 overflow-hidden">
              <button className="w-[190px] shrink-0 border-r border-[#c8c6c4] pl-1.5 text-left whitespace-nowrap">Calculate Measures</button>
              <button className="w-[421px] shrink-0 border-r border-[#c8c6c4] pl-[30px] text-left whitespace-nowrap">Scatterplot without any Measures(level of G...</button>
              <button className="w-[421px] shrink-0 border-r border-[#c8c6c4] pl-[30px] text-left whitespace-nowrap">Scatterplot with Sales, Profit and Profit Mar...</button>
              <button aria-current="page" className="w-[200px] shrink-0 border-b-6 border-[#117865] bg-white pl-[30px] pt-1.5 text-left text-[16px] font-semibold whitespace-nowrap">Scatterplot</button>
            </div>
            <button aria-label="New page" className="my-0.5 flex w-[58px] shrink-0 items-center justify-center bg-[#117865]">
              <svg width="18" height="18" viewBox="0 0 18 18" stroke="#fff" strokeWidth="4"><path d="M9 1V17M1 9H17" /></svg>
            </button>
          </nav>
        </div>
        <VisualizationsPane />
        <DataPane />
      </div>
      <footer className="flex h-3 shrink-0 items-start overflow-hidden border-t border-[#dedcda] bg-[#f3f2f1] text-[16px] leading-5 text-[#484644]">
        <span className="mt-[9px] ml-[19px] size-[3px] bg-[#484644]" />
        <span className="flex-1" />
        <span className="mt-2 h-1 w-1.5 bg-[#605e5c]" />
        <span className="mt-1 ml-[149px]">94%</span>
        <svg className="mt-2 mr-[34px] ml-[28px]" width="24" height="18" viewBox="0 0 24 18" fill="#dcebf5" stroke="#605e5c" strokeWidth="2"><path d="M1 1h22v16H1z" /></svg>
      </footer>
    </div>
  );
}
